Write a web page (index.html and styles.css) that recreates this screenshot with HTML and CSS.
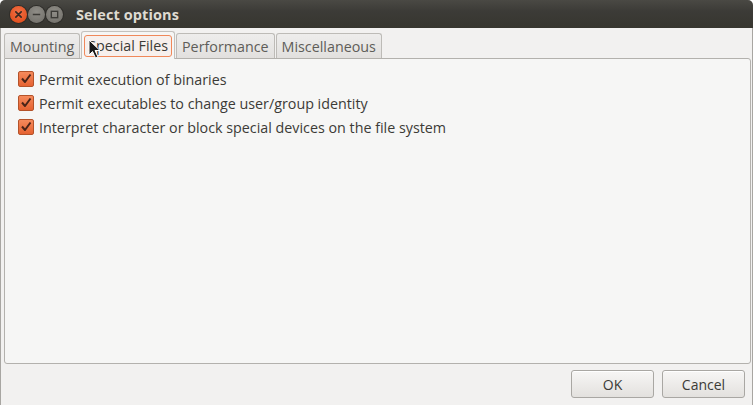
FILE: index.html
```html
<!DOCTYPE html>
<html>
<head>
<meta charset="utf-8">
<link rel="stylesheet" href="styles.css">
</head>
<body>
<div class="window">
  <div class="titlebar">
    <div class="wbtns">
      <span class="wb close"><svg width="17" height="17" viewBox="0 0 16 16"><path d="M5.5 5.5 L10.5 10.5 M10.5 5.5 L5.5 10.5" stroke="#3a2a22" stroke-width="1.6" stroke-linecap="round"/></svg></span>
      <span class="wb"><svg width="17" height="17" viewBox="0 0 16 16"><path d="M4.5 8 H11.5" stroke="#3c3b37" stroke-width="1.5"/></svg></span>
      <span class="wb"><svg width="17" height="17" viewBox="0 0 16 16"><rect x="5" y="5" width="6" height="6" fill="none" stroke="#3c3b37" stroke-width="1.3"/></svg></span>
    </div>
    <div class="title">Select options</div>
  </div>
  <div class="body">
    <div class="tabs">
      <div class="tab">Mounting</div>
      <div class="tab active"><span class="focus">Special Files</span></div>
      <div class="tab">Performance</div>
      <div class="tab">Miscellaneous</div>
    </div>
    <div class="panel">
      <label class="row"><span class="cb"><svg width="16" height="16" viewBox="0 0 16 16"><path d="M4 7.5 L7 11 L12.5 3.5" fill="none" stroke="#4a2418" stroke-width="2" stroke-linejoin="round"/></svg></span>Permit execution of binaries</label>
      <label class="row"><span class="cb"><svg width="16" height="16" viewBox="0 0 16 16"><path d="M4 7.5 L7 11 L12.5 3.5" fill="none" stroke="#4a2418" stroke-width="2" stroke-linejoin="round"/></svg></span>Permit executables to change user/group identity</label>
      <label class="row"><span class="cb"><svg width="16" height="16" viewBox="0 0 16 16"><path d="M4 7.5 L7 11 L12.5 3.5" fill="none" stroke="#4a2418" stroke-width="2" stroke-linejoin="round"/></svg></span>Interpret character or block special devices on the file system</label>
    </div>
    <div class="actions">
      <button class="btn">OK</button>
      <button class="btn">Cancel</button>
    </div>
  </div>
  <svg class="cursor" width="14" height="22" viewBox="0 0 14 22"><path d="M1 1 L1 16 L4.5 12.5 L7.5 19 L10 18 L7 11.5 L12 11.5 Z" fill="#1a1a1a" stroke="#ffffff" stroke-width="1"/></svg>
</div>
</body>
</html>
```
FILE: styles.css
```css
* { box-sizing: border-box; }
html, body { margin: 0; padding: 0; background: #ffffff; }
body { width: 755px; height: 405px; overflow: hidden; font-family: "Open Sans", "DejaVu Sans", sans-serif; }
.window {
  position: relative;
  width: 753px; height: 405px;
  display: flex; flex-direction: column;
  border-radius: 5px 5px 0 0;
  overflow: hidden;
}
.titlebar {
  height: 28px;
  background: linear-gradient(#4a4944, #3c3b37 40%, #37362f);
  display: flex; align-items: center;
  padding-left: 10px;
}
.wbtns { display: flex; gap: 1px; }
.wb {
  width: 17px; height: 17px; border-radius: 50%;
  background: radial-gradient(circle at 50% 35%, #8f8d87, #6f6d67);
  display: flex;
  box-shadow: 0 0 0 1px #2e2d29;
}
.wb.close { background: radial-gradient(circle at 50% 35%, #f26f45, #dd4814); }
.title {
  margin-left: 13px;
  color: #dfdbd2;
  font-weight: bold;
  font-size: 14.5px;
  letter-spacing: 0.1px;
}
.body {
  flex: 1;
  background: #f2f1f0;
  border-left: 1px solid #a8a6a2;
  border-right: 1px solid #a8a6a2;
  display: flex; flex-direction: column;
  padding: 2px 1px 0 3px;
}
.tabs { display: flex; align-items: flex-end; height: 28px; padding-left: 0; }
.tab {
  height: 25px;
  border: 1px solid #bdbbb7;
  border-bottom: none;
  border-radius: 3px 3px 0 0;
  background: linear-gradient(#eeedec, #e2e0de);
  color: #5e5d59;
  font-size: 14.3px;
  padding: 0 5px;
  display: flex; align-items: center;
  margin-right: 1px;
}
.tab.active {
  height: 28px;
  background: #f6f6f5;
  border-color: #c3c1bd;
  padding: 0 2px;
  position: relative; top: 1px;
  z-index: 1;
}
.tab.active .focus {
  border: 1px solid #f0885a;
  border-radius: 3px;
  padding: 0 3px;
  height: 22px;
  display: flex; align-items: center;
  background: #f7f0ed;
  color: #3c3b37;
}
.panel {
  height: 306px;
  background: #f6f6f5;
  border: 1px solid #b3b1ad;
  border-radius: 0 3px 3px 3px;
  padding: 8px 0 0 13px;
  display: flex; flex-direction: column;
}
.row {
  display: flex; align-items: center;
  height: 24px;
  font-size: 14.3px;
  color: #3c3b37;
}
.cb {
  width: 16px; height: 16px;
  border-radius: 2px;
  background: linear-gradient(#f58a5c, #e56231);
  border: 1px solid #b4532a;
  margin-right: 5px;
  display: flex;
}
.cb svg { margin: -1px; }
.actions {
  display: flex; justify-content: flex-end; gap: 8px;
  padding: 6px 6px 0 0;
}
.btn {
  width: 83px; height: 28px;
  border: 1px solid #a9a7a3;
  border-radius: 3px;
  background: linear-gradient(#f7f6f5, #e3e1de);
  color: #3c3b37;
  font-family: inherit;
  font-size: 14px;
  box-shadow: inset 0 1px 0 #ffffff;
}
.cursor { position: absolute; left: 88px; top: 39px; z-index: 5; }
```
